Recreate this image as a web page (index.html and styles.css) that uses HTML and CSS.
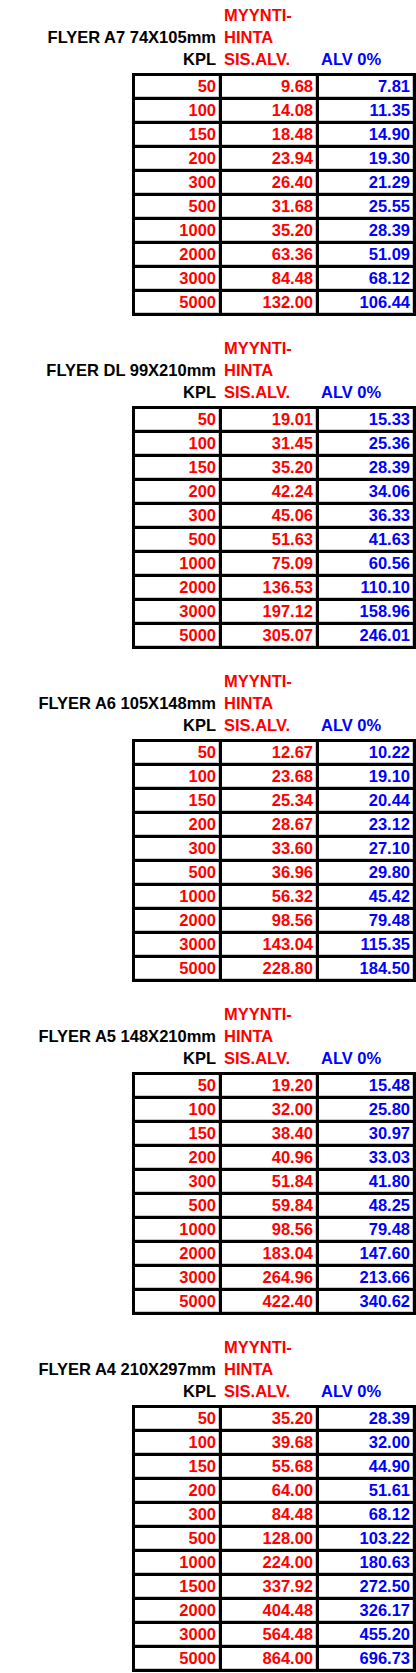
FILE: index.html
```html
<!DOCTYPE html>
<html lang="fi">
<head>
<meta charset="utf-8">
<title>Flyer hinnasto</title>
<link rel="stylesheet" href="styles.css">
</head>
<body>
<div class="page">

<section class="sheet">
  <div class="head">
    <span class="c2">MYYNTI-</span>
    <span class="title">FLYER A7 74X105mm</span><span class="c2">HINTA</span>
    <span class="kpl">KPL</span><span class="c2">SIS.ALV.</span><span class="c3">ALV 0%</span>
  </div>
  <table>
    <tr><td class="k">50</td><td class="p">9.68</td><td class="v">7.81</td></tr>
    <tr><td class="k">100</td><td class="p">14.08</td><td class="v">11.35</td></tr>
    <tr><td class="k">150</td><td class="p">18.48</td><td class="v">14.90</td></tr>
    <tr><td class="k">200</td><td class="p">23.94</td><td class="v">19.30</td></tr>
    <tr><td class="k">300</td><td class="p">26.40</td><td class="v">21.29</td></tr>
    <tr><td class="k">500</td><td class="p">31.68</td><td class="v">25.55</td></tr>
    <tr><td class="k">1000</td><td class="p">35.20</td><td class="v">28.39</td></tr>
    <tr><td class="k">2000</td><td class="p">63.36</td><td class="v">51.09</td></tr>
    <tr><td class="k">3000</td><td class="p">84.48</td><td class="v">68.12</td></tr>
    <tr><td class="k">5000</td><td class="p">132.00</td><td class="v">106.44</td></tr>
  </table>
</section>

<section class="sheet">
  <div class="head">
    <span class="c2">MYYNTI-</span>
    <span class="title">FLYER DL 99X210mm</span><span class="c2">HINTA</span>
    <span class="kpl">KPL</span><span class="c2">SIS.ALV.</span><span class="c3">ALV 0%</span>
  </div>
  <table>
    <tr><td class="k">50</td><td class="p">19.01</td><td class="v">15.33</td></tr>
    <tr><td class="k">100</td><td class="p">31.45</td><td class="v">25.36</td></tr>
    <tr><td class="k">150</td><td class="p">35.20</td><td class="v">28.39</td></tr>
    <tr><td class="k">200</td><td class="p">42.24</td><td class="v">34.06</td></tr>
    <tr><td class="k">300</td><td class="p">45.06</td><td class="v">36.33</td></tr>
    <tr><td class="k">500</td><td class="p">51.63</td><td class="v">41.63</td></tr>
    <tr><td class="k">1000</td><td class="p">75.09</td><td class="v">60.56</td></tr>
    <tr><td class="k">2000</td><td class="p">136.53</td><td class="v">110.10</td></tr>
    <tr><td class="k">3000</td><td class="p">197.12</td><td class="v">158.96</td></tr>
    <tr><td class="k">5000</td><td class="p">305.07</td><td class="v">246.01</td></tr>
  </table>
</section>

<section class="sheet">
  <div class="head">
    <span class="c2">MYYNTI-</span>
    <span class="title">FLYER A6 105X148mm</span><span class="c2">HINTA</span>
    <span class="kpl">KPL</span><span class="c2">SIS.ALV.</span><span class="c3">ALV 0%</span>
  </div>
  <table>
    <tr><td class="k">50</td><td class="p">12.67</td><td class="v">10.22</td></tr>
    <tr><td class="k">100</td><td class="p">23.68</td><td class="v">19.10</td></tr>
    <tr><td class="k">150</td><td class="p">25.34</td><td class="v">20.44</td></tr>
    <tr><td class="k">200</td><td class="p">28.67</td><td class="v">23.12</td></tr>
    <tr><td class="k">300</td><td class="p">33.60</td><td class="v">27.10</td></tr>
    <tr><td class="k">500</td><td class="p">36.96</td><td class="v">29.80</td></tr>
    <tr><td class="k">1000</td><td class="p">56.32</td><td class="v">45.42</td></tr>
    <tr><td class="k">2000</td><td class="p">98.56</td><td class="v">79.48</td></tr>
    <tr><td class="k">3000</td><td class="p">143.04</td><td class="v">115.35</td></tr>
    <tr><td class="k">5000</td><td class="p">228.80</td><td class="v">184.50</td></tr>
  </table>
</section>

<section class="sheet">
  <div class="head">
    <span class="c2">MYYNTI-</span>
    <span class="title">FLYER A5 148X210mm</span><span class="c2">HINTA</span>
    <span class="kpl">KPL</span><span class="c2">SIS.ALV.</span><span class="c3">ALV 0%</span>
  </div>
  <table>
    <tr><td class="k">50</td><td class="p">19.20</td><td class="v">15.48</td></tr>
    <tr><td class="k">100</td><td class="p">32.00</td><td class="v">25.80</td></tr>
    <tr><td class="k">150</td><td class="p">38.40</td><td class="v">30.97</td></tr>
    <tr><td class="k">200</td><td class="p">40.96</td><td class="v">33.03</td></tr>
    <tr><td class="k">300</td><td class="p">51.84</td><td class="v">41.80</td></tr>
    <tr><td class="k">500</td><td class="p">59.84</td><td class="v">48.25</td></tr>
    <tr><td class="k">1000</td><td class="p">98.56</td><td class="v">79.48</td></tr>
    <tr><td class="k">2000</td><td class="p">183.04</td><td class="v">147.60</td></tr>
    <tr><td class="k">3000</td><td class="p">264.96</td><td class="v">213.66</td></tr>
    <tr><td class="k">5000</td><td class="p">422.40</td><td class="v">340.62</td></tr>
  </table>
</section>

<section class="sheet">
  <div class="head">
    <span class="c2">MYYNTI-</span>
    <span class="title">FLYER A4 210X297mm</span><span class="c2">HINTA</span>
    <span class="kpl">KPL</span><span class="c2">SIS.ALV.</span><span class="c3">ALV 0%</span>
  </div>
  <table>
    <tr><td class="k">50</td><td class="p">35.20</td><td class="v">28.39</td></tr>
    <tr><td class="k">100</td><td class="p">39.68</td><td class="v">32.00</td></tr>
    <tr><td class="k">150</td><td class="p">55.68</td><td class="v">44.90</td></tr>
    <tr><td class="k">200</td><td class="p">64.00</td><td class="v">51.61</td></tr>
    <tr><td class="k">300</td><td class="p">84.48</td><td class="v">68.12</td></tr>
    <tr><td class="k">500</td><td class="p">128.00</td><td class="v">103.22</td></tr>
    <tr><td class="k">1000</td><td class="p">224.00</td><td class="v">180.63</td></tr>
    <tr><td class="k">1500</td><td class="p">337.92</td><td class="v">272.50</td></tr>
    <tr><td class="k">2000</td><td class="p">404.48</td><td class="v">326.17</td></tr>
    <tr><td class="k">3000</td><td class="p">564.48</td><td class="v">455.20</td></tr>
    <tr><td class="k">5000</td><td class="p">864.00</td><td class="v">696.73</td></tr>
  </table>
</section>

</div>
</body>
</html>
```

FILE: styles.css
```css
html, body {
  margin: 0;
  padding: 0;
  background: #ffffff;
}

body {
  font-family: "Liberation Sans", Arial, sans-serif;
  font-weight: bold;
  font-size: 16.5px;
  color: #000000;
}

.page {
  width: 416px;
  padding-top: 4px;
}

.sheet {
  margin-bottom: 21px;
}

.sheet:last-child {
  margin-bottom: 0;
}

.head {
  display: grid;
  grid-template-columns: 135px 87px 97px 97px;
  grid-auto-rows: 22px;
  line-height: 22px;
  margin-bottom: 3px;
  white-space: nowrap;
}

.head .c2 {
  grid-column: 3;
  padding-left: 2px;
  color: #ff0000;
}

.head .c3 {
  grid-column: 4;
  padding-left: 2px;
  color: #0000ff;
}

.head .title {
  grid-column: 1 / 3;
  text-align: right;
  padding-right: 6px;
}

.head .kpl {
  grid-column: 2;
  text-align: right;
  padding-right: 6px;
}

table {
  margin-left: 132px;
  width: 284px;
  table-layout: fixed;
  border-collapse: separate;
  border-spacing: 0;
  border-left: 3px solid #000000;
  border-top: 3px solid #000000;
}

td {
  box-sizing: border-box;
  padding: 0 3px 0 0;
  line-height: 21px;
  text-align: right;
  white-space: nowrap;
  border-right: 3px solid #000000;
  border-bottom: 3px solid #000000;
  box-shadow: inset -1px -1px 0 #c8c8c8;
}

td.k {
  width: 87px;
  color: #ff0000;
}

td.p {
  width: 97px;
  color: #ff0000;
}

td.v {
  width: 97px;
  color: #0000ff;
}
```
